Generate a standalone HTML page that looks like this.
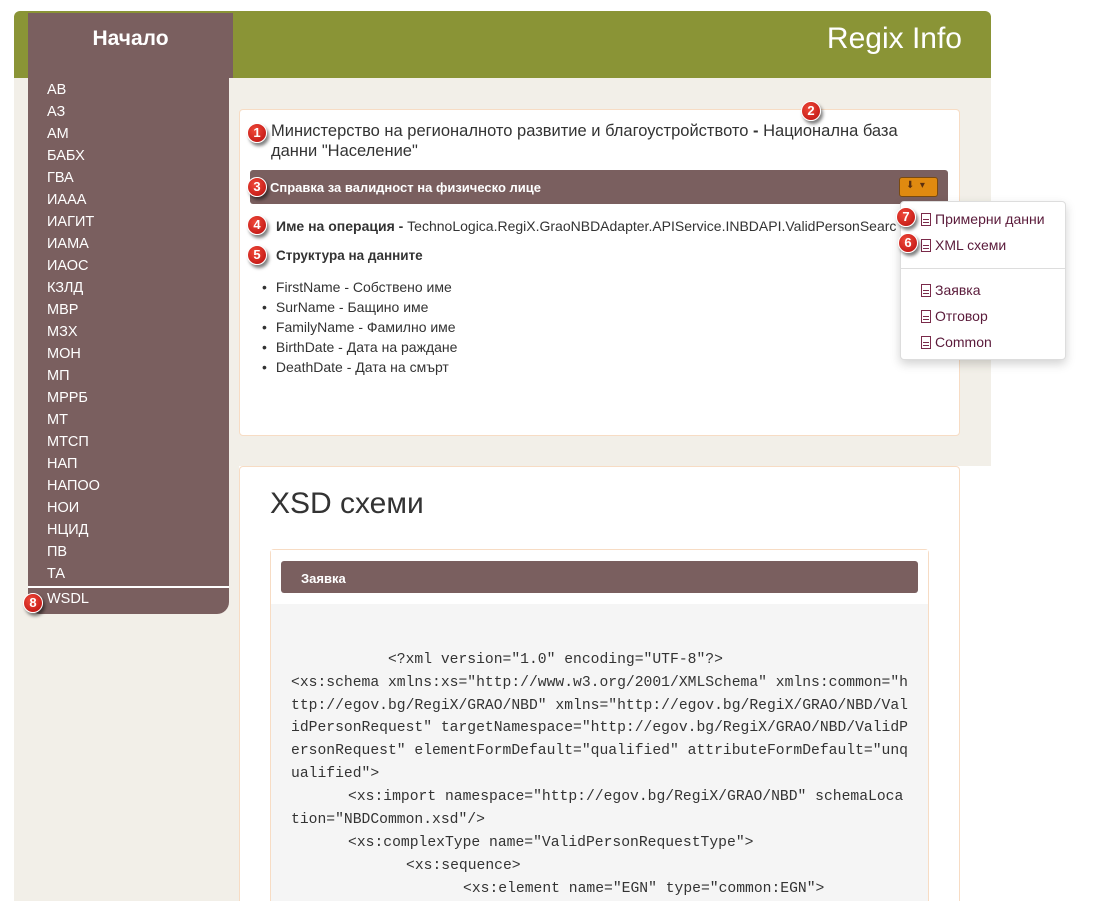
<!DOCTYPE html>
<html><head><meta charset="utf-8"><style>
*{box-sizing:border-box;margin:0;padding:0}
html,body{width:1100px;height:901px;overflow:hidden}
body{background:#fff;font-family:"Liberation Sans",sans-serif;color:#333;position:relative}
.abs{position:absolute}
.hdr{left:14px;top:11px;width:977px;height:67px;background:#8a9436;border-radius:6px 6px 0 0}
.home{left:28px;top:13px;width:205px;height:65px;background:#7a5f5f;color:#fff;font-weight:bold;font-size:21px;text-align:center;padding-top:14px}
.title{right:138px;top:22px;color:#fff;font-size:30px}
.bgl{left:14px;top:78px;width:225px;height:823px;background:#f2efe8}
.bgm{left:239px;top:78px;width:752px;height:388px;background:#f2efe8}
.menu{left:28px;top:78px;width:201px;height:536px;background:#7a5f5f;border-radius:0 0 12px 12px}
.menu div{color:#fff;font-size:14.5px;height:22px;line-height:22px;padding-left:19px}
.panel{background:#fff;border:1px solid #f7dcc4;border-radius:4px}
.badge{width:20px;height:20px;border-radius:50%;background:radial-gradient(circle at 40% 35%,#f04a3a,#b80d0d);border:1.5px solid #fff;box-shadow:2px 3px 3px rgba(0,0,0,.5);color:#fff;font-weight:bold;font-size:13px;text-align:center;line-height:17px}
.bar{background:#7a5f5f;border-radius:3px;color:#fff;font-weight:bold;font-size:13px}
li{list-style:none;font-size:14px;height:20px;line-height:20px}
li:before{content:"•";margin-right:9px}
.dd{left:900px;top:201px;width:166px;height:159px;background:#fff;border:1px solid #ddd;border-radius:4px;box-shadow:0 4px 10px rgba(0,0,0,.18)}
.dd div{position:absolute;left:20px;font-size:14px;color:#5a1a3a}
.doc{display:inline-block;width:10px;height:13px;border:1px solid #7a2a4a;margin-right:4px;vertical-align:-2px;background:repeating-linear-gradient(#fff 0 2px,#7a2a4a 2px 3px);background-size:6px 100%;background-position:1px 3px;background-repeat:no-repeat}
pre{font-family:"Liberation Mono",monospace;font-size:14.7px;line-height:22.8px;color:#333;white-space:pre}
</style></head><body>
<div class="abs hdr"></div>
<div class="abs home">Начало</div>
<div class="abs title">Regix Info</div>
<div class="abs bgl"></div>
<div class="abs bgm"></div>
<div class="abs menu" style="padding-top:1px">
<div>АВ</div><div>АЗ</div><div>АМ</div><div>БАБХ</div><div>ГВА</div><div>ИААА</div><div>ИАГИТ</div><div>ИАМА</div><div>ИАОС</div><div>КЗЛД</div><div>МВР</div><div>МЗХ</div><div>МОН</div><div>МП</div><div>МРРБ</div><div>МТ</div><div>МТСП</div><div>НАП</div><div>НАПОО</div><div>НОИ</div><div>НЦИД</div><div>ПВ</div><div>ТА</div>
<div style="border-top:2px solid #fff;margin-top:1px">WSDL</div>
</div>
<div class="abs badge" style="left:23px;top:593px">8</div>

<div class="abs panel" style="left:239px;top:109px;width:721px;height:327px"></div>
<div class="abs" style="left:271px;top:121px;width:690px;font-size:16.5px;line-height:20px">Министерство на регионалното развитие и благоустройството <b>-</b> Национална база<br>данни "Население"</div>
<div class="abs badge" style="left:247px;top:123px">1</div>
<div class="abs badge" style="left:801px;top:101px">2</div>
<div class="abs bar" style="left:250px;top:170px;width:698px;height:34px;padding:10px 0 0 20px">Справка за валидност на физическо лице</div>
<div class="abs badge" style="left:247px;top:177px">3</div>
<div class="abs" style="left:899px;top:177px;width:39px;height:20px;background:#e08a10;border:1px solid #7a4a10;border-radius:3px;color:#5a3010;font-size:10px;padding:2px 0 0 6px">⬇&nbsp;&nbsp;▾</div>
<div class="abs" style="left:276px;top:218px;font-size:14px;white-space:nowrap;width:620px;overflow:hidden"><b>Име на операция -</b> TechnoLogica.RegiX.GraoNBDAdapter.APIService.INBDAPI.ValidPersonSearch</div>
<div class="abs badge" style="left:247px;top:215px">4</div>
<div class="abs" style="left:276px;top:248px;font-size:13.5px;font-weight:bold">Структура на данните</div>
<div class="abs badge" style="left:247px;top:245px">5</div>
<ul class="abs" style="left:262px;top:277px">
<li>FirstName - Собствено име</li><li>SurName - Бащино име</li><li>FamilyName - Фамилно име</li><li>BirthDate - Дата на раждане</li><li>DeathDate - Дата на смърт</li></ul>

<div class="abs dd">
<div style="top:9px"><span class="doc"></span>Примерни данни</div>
<div style="top:35px"><span class="doc"></span>XML схеми</div>
<div style="top:66px;left:0;width:164px;height:1px;background:#ddd"></div>
<div style="top:80px"><span class="doc"></span>Заявка</div>
<div style="top:106px"><span class="doc"></span>Отговор</div>
<div style="top:132px"><span class="doc"></span>Common</div>
</div>
<div class="abs badge" style="left:896px;top:207px">7</div>
<div class="abs badge" style="left:898px;top:233px">6</div>

<div class="abs panel" style="left:239px;top:466px;width:721px;height:450px"></div>
<div class="abs" style="left:270px;top:487px;font-size:30px">XSD схеми</div>
<div class="abs" style="left:270px;top:549px;width:659px;height:360px;border:1px solid #f7dcc4;border-radius:4px;background:#f5f5f5"></div>
<div class="abs" style="left:271px;top:550px;width:657px;height:54px;background:#fff"></div>
<div class="abs bar" style="left:281px;top:561px;width:637px;height:32px;padding:10px 0 0 20px">Заявка</div>
<pre class="abs" style="left:291px;top:649px">           &lt;?xml version="1.0" encoding="UTF-8"?&gt;
&lt;xs:schema xmlns:xs="http://www.w3.org/2001/XMLSchema" xmlns:common="h
ttp://egov.bg/RegiX/GRAO/NBD" xmlns="http://egov.bg/RegiX/GRAO/NBD/Val
idPersonRequest" targetNamespace="http://egov.bg/RegiX/GRAO/NBD/ValidP
ersonRequest" elementFormDefault="qualified" attributeFormDefault="unq
ualified"&gt;
</pre>
<pre class="abs" style="left:348px;top:786px">&lt;xs:import namespace="http://egov.bg/RegiX/GRAO/NBD" schemaLoca</pre>
<pre class="abs" style="left:291px;top:809px">tion="NBDCommon.xsd"/&gt;</pre>
<pre class="abs" style="left:348px;top:832px">&lt;xs:complexType name="ValidPersonRequestType"&gt;</pre>
<pre class="abs" style="left:406px;top:855px">&lt;xs:sequence&gt;</pre>
<pre class="abs" style="left:463px;top:878px">&lt;xs:element name="EGN" type="common:EGN"&gt;</pre>
</body></html>
